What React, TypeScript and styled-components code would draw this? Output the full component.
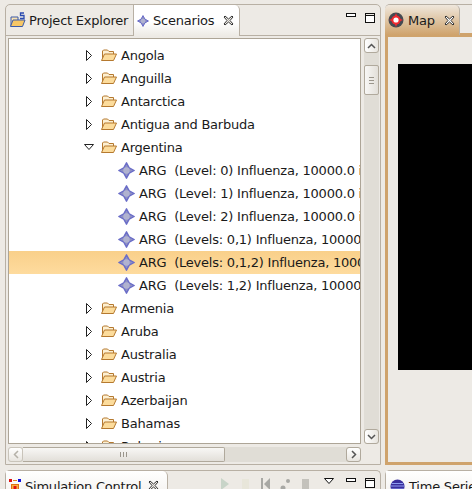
import React from 'react';
import styled, { createGlobalStyle } from 'styled-components';

const GlobalStyle = createGlobalStyle`
  html, body {
    margin: 0;
    padding: 0;
    background: #edeae5;
    overflow: hidden;
  }
`;

type Node = { label: string; kind: 'closed' | 'open' | 'scenario'; selected?: boolean };

const nodes: Node[] = [
  { label: 'Angola', kind: 'closed' },
  { label: 'Anguilla', kind: 'closed' },
  { label: 'Antarctica', kind: 'closed' },
  { label: 'Antigua and Barbuda', kind: 'closed' },
  { label: 'Argentina', kind: 'open' },
  { label: 'ARG  (Level: 0) Influenza, 10000.0 infectious', kind: 'scenario' },
  { label: 'ARG  (Level: 1) Influenza, 10000.0 infectious', kind: 'scenario' },
  { label: 'ARG  (Level: 2) Influenza, 10000.0 infectious', kind: 'scenario' },
  { label: 'ARG  (Levels: 0,1) Influenza, 10000.0 infectious', kind: 'scenario' },
  { label: 'ARG  (Levels: 0,1,2) Influenza, 10000.0 infectious', kind: 'scenario', selected: true },
  { label: 'ARG  (Levels: 1,2) Influenza, 10000.0 infectious', kind: 'scenario' },
  { label: 'Armenia', kind: 'closed' },
  { label: 'Aruba', kind: 'closed' },
  { label: 'Australia', kind: 'closed' },
  { label: 'Austria', kind: 'closed' },
  { label: 'Azerbaijan', kind: 'closed' },
  { label: 'Bahamas', kind: 'closed' },
  { label: 'Bahrain', kind: 'closed' },
];

const ScenarioIcon: React.FC = () => (
  <svg width="17" height="17" viewBox="0 0 17 17">
    <path
      d="M8.5 0.8 L11.2 5.8 L16.2 8.5 L11.2 11.2 L8.5 16.2 L5.8 11.2 L0.8 8.5 L5.8 5.8 Z"
      fill="#8f91c4"
      stroke="#6a6dc8"
      strokeWidth="1.4"
      strokeLinejoin="round"
    />
    <circle cx="8.5" cy="8.5" r="3.2" fill="#b0b2d0" />
  </svg>
);

const FolderIcon: React.FC = () => (
  <svg width="16" height="13" viewBox="0 0 16 13">
    <path d="M1.5 11.5 V2 L2.5 1 H6.5 L8 2.5 H12.5 V5" fill="#fdf0d2" stroke="#b5792f" strokeWidth="1" />
    <path d="M0.5 11.5 L3.5 5 H15.5 L12.5 11.5 Z" fill="#fcdc9c" stroke="#b5792f" strokeWidth="1" strokeLinejoin="round" />
  </svg>
);

const Twisty: React.FC<{ open?: boolean }> = ({ open }) => (
  <svg width="11" height="11" viewBox="0 0 11 11">
    {open ? (
      <path d="M0.5 2.5 H9.5 L5 7.5 Z" fill="#fff" stroke="#222" strokeWidth="1" />
    ) : (
      <path d="M2.5 0.5 V10.5 L7.5 5.5 Z" fill="#fff" stroke="#222" strokeWidth="1" />
    )}
  </svg>
);

const CloseIcon: React.FC<{ light?: boolean }> = ({ light }) => (
  <svg width="11" height="11" viewBox="0 0 11 11">
    <path
      d="M2 1 L5.5 4 L9 1 L10 2 L7 5.5 L10 9 L9 10 L5.5 7 L2 10 L1 9 L4 5.5 L1 2 Z"
      fill={light ? '#fff' : '#edeae5'}
      stroke="#333"
      strokeWidth="1"
      strokeLinejoin="round"
    />
  </svg>
);

const MinimizeIcon: React.FC = () => (
  <svg width="10" height="5" viewBox="0 0 10 5">
    <rect x="0.5" y="0.5" width="9" height="3" fill="#fff" stroke="#111" />
  </svg>
);

const MaximizeIcon: React.FC = () => (
  <svg width="10" height="10" viewBox="0 0 10 10">
    <rect x="0.5" y="0.5" width="9" height="9" fill="#fff" stroke="#111" />
    <rect x="0.5" y="0.5" width="9" height="2" fill="#edeae5" stroke="#111" />
  </svg>
);

const DropArrow: React.FC = () => (
  <svg width="10" height="6" viewBox="0 0 10 6">
    <path d="M0.5 0.5 H9.5 L5 5.5 Z" fill="#fff" stroke="#111" strokeWidth="1" />
  </svg>
);

const ExplorerIcon: React.FC = () => (
  <svg width="16" height="16" viewBox="0 0 16 16">
    <path d="M1 14 V5 H8 V14 Z" fill="#fbe3b0" stroke="#3a5aa8" />
    <path d="M0.5 14.5 L3 8 H15 L12.5 14.5 Z" fill="#f6c766" stroke="#3a5aa8" />
    <path d="M14 1 H10.5 V3.5 H14 V6.5 H10" fill="none" stroke="#2b4bb0" strokeWidth="1.3" />
  </svg>
);

const MapIcon: React.FC = () => (
  <svg width="16" height="16" viewBox="0 0 16 16">
    <circle cx="8" cy="8" r="7.5" fill="#454a52" />
    <path d="M8 1 L10 6 L15 8 L10 10 L8 15 L6 10 L1 8 L6 6 Z" fill="#f02a30" />
    <circle cx="8" cy="8" r="4.6" fill="#f02a30" />
    <circle cx="8" cy="8" r="2.6" fill="#fff" />
  </svg>
);

const SimulationIcon: React.FC = () => (
  <svg width="12" height="12" viewBox="0 0 12 12">
    <rect x="0" y="0" width="3" height="3" fill="#e01010" />
    <rect x="9" y="0" width="3" height="3" fill="#1010e0" />
    <rect x="4" y="1" width="4" height="1" fill="#e08020" />
    <rect x="2.5" y="5.5" width="7" height="6" fill="#f8b040" stroke="#e07010" />
    <rect x="4.5" y="7" width="3" height="3" fill="#e01010" />
  </svg>
);

const GlobeIcon: React.FC = () => (
  <svg width="15" height="15" viewBox="0 0 15 15">
    <circle cx="7.5" cy="7.5" r="7" fill="#3a2f9c" />
    <path d="M0.5 7 H14.5 M1 10 H14 M1.5 4.5 H13" stroke="#8d9cf0" strokeWidth="1.2" />
  </svg>
);

const ToolbarGlyphs: React.FC = () => (
  <svg width="88" height="12" viewBox="0 0 88 12">
    <path d="M0 0 L8 6 L0 12 Z" fill="#c8d4c8" />
    <rect x="21" y="1" width="7" height="11" fill="#e8e6da" />
    <rect x="40" y="0" width="2" height="12" fill="#a8a8a4" />
    <path d="M43 6 L49 0 V12 Z" fill="#a8a8a4" />
    <circle cx="67" cy="3" r="2" fill="#a8a8a4" />
    <circle cx="62" cy="10" r="2.5" fill="#a8a8a4" />
    <rect x="81" y="1" width="7" height="11" fill="#c4c2bc" />
  </svg>
);

const ScrollUp: React.FC = () => (
  <svg width="9" height="6" viewBox="0 0 9 6">
    <path d="M1 5 L4.5 1.5 L8 5" fill="none" stroke="#555" strokeWidth="1.5" />
  </svg>
);

const ScrollDown: React.FC = () => (
  <svg width="9" height="6" viewBox="0 0 9 6">
    <path d="M1 1 L4.5 4.5 L8 1" fill="none" stroke="#555" strokeWidth="1.5" />
  </svg>
);

const ScrollLeft: React.FC = () => (
  <svg width="6" height="9" viewBox="0 0 6 9">
    <path d="M5 1 L1.5 4.5 L5 8" fill="none" stroke="#b5b1a8" strokeWidth="1.5" />
  </svg>
);

const ScrollRight: React.FC = () => (
  <svg width="6" height="9" viewBox="0 0 6 9">
    <path d="M1 1 L4.5 4.5 L1 8" fill="none" stroke="#555" strokeWidth="1.5" />
  </svg>
);

const App: React.FC = () => (
  <Workbench>
    <GlobalStyle />
    <ScenariosPanel>
      <TabBar>
        <InactiveTab>
          <ExplorerIcon />
          Project Explorer
        </InactiveTab>
        <ActiveTab>
          <SmallDiamond>
            <ScenarioIcon />
          </SmallDiamond>
          Scenarios
          <CloseSlot>
            <CloseIcon />
          </CloseSlot>
        </ActiveTab>
        <TabFill>
          <MinimizeIcon />
          <MaximizeIcon />
        </TabFill>
      </TabBar>
      <ViewBody>
        <TreeBox>
          {nodes.map((node) => (
            <TreeRow key={node.label} $selected={node.selected}>
              {node.kind === 'scenario' ? (
                <ScenarioCell>
                  <ScenarioIcon />
                </ScenarioCell>
              ) : (
                <FolderCell>
                  <Twisty open={node.kind === 'open'} />
                  <FolderIcon />
                </FolderCell>
              )}
              <RowLabel>{node.label}</RowLabel>
            </TreeRow>
          ))}
        </TreeBox>
        <VerticalBar>
          <ArrowButton>
            <ScrollUp />
          </ArrowButton>
          <BarThumbTrack>
            <TrackSpacer $height={12} />
            <VerticalThumb>
              <Grip />
              <Grip />
              <Grip />
            </VerticalThumb>
          </BarThumbTrack>
          <ArrowButton>
            <ScrollDown />
          </ArrowButton>
        </VerticalBar>
        <HorizontalBar>
          <SideButton $disabled>
            <ScrollLeft />
          </SideButton>
          <HorizontalThumb>
            <VGrip />
            <VGrip />
            <VGrip />
          </HorizontalThumb>
          <BarThumbTrack />
          <SideButton>
            <ScrollRight />
          </SideButton>
        </HorizontalBar>
      </ViewBody>
    </ScenariosPanel>

    <MapPanel>
      <MapTabBar>
        <MapTab>
          <MapIcon />
          Map
          <MapClose>
            <CloseIcon light />
          </MapClose>
        </MapTab>
        <MapTabRest />
      </MapTabBar>
      <MapBody>
        <MapCanvas />
      </MapBody>
    </MapPanel>

    <ControlPanel>
      <ControlTab>
        <SimulationIcon />
        Simulation Control
        <ControlClose>
          <CloseIcon />
        </ControlClose>
      </ControlTab>
      <ControlTools>
        <GlyphSlot>
          <ToolbarGlyphs />
        </GlyphSlot>
        <DropSlot>
          <DropArrow />
        </DropSlot>
        <MinimizeIcon />
        <MaximizeIcon />
      </ControlTools>
    </ControlPanel>

    <SeriesPanel>
      <SeriesTab>
        <GlobeIcon />
        Time Series
      </SeriesTab>
    </SeriesPanel>
  </Workbench>
);

const Workbench = styled.div`
  width: 472px;
  height: 489px;
  overflow: hidden;
  display: grid;
  grid-template-columns: 376px 87px;
  grid-template-rows: 461px 19px;
  column-gap: 4px;
  row-gap: 5px;
  padding: 4px 0 0 5px;
  box-sizing: border-box;
  background: #edeae5;
  font-family: 'DejaVu Sans', sans-serif;
  font-size: 13px;
  letter-spacing: -0.22px;
  color: #1a1a1a;

  svg {
    flex: none;
  }
`;

const ScenariosPanel = styled.section`
  width: 376px;
  height: 461px;
  box-sizing: border-box;
  border: 1px solid #b8b0a4;
  border-radius: 5px 5px 0 0;
  display: flex;
  flex-direction: column;
  overflow: hidden;
`;

const TabBar = styled.div`
  height: 31px;
  display: flex;
  flex: none;
`;

const InactiveTab = styled.div`
  width: 128px;
  box-sizing: border-box;
  display: flex;
  align-items: center;
  gap: 3px;
  padding-left: 4px;
  border-right: 1px solid #b8b0a4;
  border-bottom: 1px solid #b8b0a4;
  white-space: nowrap;
`;

const ActiveTab = styled.div`
  width: 106px;
  box-sizing: border-box;
  display: flex;
  align-items: center;
  gap: 4px;
  padding-left: 3px;
  background: linear-gradient(#fff 0%, #fff 55%, #edeae5 100%);
  border-right: 1px solid #b8b0a4;
  border-top-right-radius: 5px;
  white-space: nowrap;
`;

const SmallDiamond = styled.span`
  width: 12px;
  height: 12px;
  display: flex;
  align-items: center;
  justify-content: center;
  & > svg {
    width: 12px;
    height: 12px;
  }
`;

const CloseSlot = styled.span`
  display: flex;
  margin-left: 5px;
`;

const MapClose = styled.span`
  display: flex;
  margin-left: 5px;
`;

const ControlClose = styled.span`
  display: flex;
  margin-left: 3px;
  margin-top: 1px;
`;

const TabFill = styled.div`
  flex: 1;
  box-sizing: border-box;
  display: flex;
  align-items: flex-start;
  justify-content: flex-end;
  gap: 9px;
  padding: 8px 5px 0 0;
  border-bottom: 1px solid #b8b0a4;
`;

const ViewBody = styled.div`
  flex: 1;
  min-height: 0;
  display: grid;
  grid-template-columns: 353px 15px;
  grid-template-rows: 406px 15px;
  column-gap: 3px;
  row-gap: 3px;
  padding: 2px 0 0 2px;
`;

const TreeBox = styled.div`
  box-sizing: border-box;
  border: 1px solid #ada597;
  background: #fff;
  overflow: hidden;
  padding-top: 5px;
`;

const TreeRow = styled.div<{ $selected?: boolean }>`
  height: 23px;
  box-sizing: border-box;
  display: flex;
  align-items: center;
  white-space: nowrap;
  background: ${(p) => (p.$selected ? 'linear-gradient(#f9d08a, #fedb9e)' : 'transparent')};
`;

const FolderCell = styled.span`
  width: 112px;
  flex: none;
  box-sizing: border-box;
  padding-left: 75px;
  display: flex;
  align-items: center;
  gap: 6px;
`;

const ScenarioCell = styled.span`
  width: 130px;
  flex: none;
  box-sizing: border-box;
  padding-left: 109px;
  display: flex;
  align-items: center;
`;

const RowLabel = styled.span`
  white-space: pre;
`;

const VerticalBar = styled.div`
  display: flex;
  flex-direction: column;
  background: #e0ddd6;
  border-radius: 3px;
`;

const ArrowButton = styled.div`
  height: 15px;
  flex: none;
  box-sizing: border-box;
  display: flex;
  align-items: center;
  justify-content: center;
  border: 1px solid #b0a99c;
  border-radius: 3px;
  background: linear-gradient(90deg, #fff, #e8e5df);
`;

const BarThumbTrack = styled.div`
  flex: 1;
`;

const TrackSpacer = styled.div<{ $height: number }>`
  height: ${(p) => p.$height}px;
`;

const VerticalThumb = styled.div`
  height: 30px;
  box-sizing: border-box;
  display: flex;
  flex-direction: column;
  align-items: center;
  justify-content: center;
  gap: 2px;
  border: 1px solid #b0a99c;
  border-radius: 2px;
  background: linear-gradient(90deg, #f8f7f5, #e2dfd9);
`;

const Grip = styled.span`
  width: 5px;
  height: 1px;
  background: #9a958b;
`;

const HorizontalBar = styled.div`
  display: flex;
  align-items: stretch;
  background: #e0ddd6;
  border-radius: 3px;
`;

const SideButton = styled.div<{ $disabled?: boolean }>`
  width: 15px;
  flex: none;
  box-sizing: border-box;
  display: flex;
  align-items: center;
  justify-content: center;
  border: 1px solid ${(p) => (p.$disabled ? '#c9c4ba' : '#b0a99c')};
  border-radius: 3px;
  background: linear-gradient(#fff, #e8e5df);
`;

const HorizontalThumb = styled.div`
  width: 202px;
  flex: none;
  box-sizing: border-box;
  display: flex;
  align-items: center;
  justify-content: center;
  gap: 2px;
  border: 1px solid #b0a99c;
  border-left: none;
  border-radius: 0 2px 2px 0;
  background: linear-gradient(#f8f7f5, #e2dfd9);
`;

const VGrip = styled.span`
  width: 1px;
  height: 5px;
  background: #9a958b;
`;

const MapPanel = styled.section`
  width: 87px;
  height: 461px;
  display: flex;
  flex-direction: column;
`;

const MapTabBar = styled.div`
  height: 31px;
  flex: none;
  display: flex;
  background: #edeae5;
  border-top: 1px solid #b8b0a4;
  box-sizing: border-box;
  border-top-left-radius: 5px;
`;

const MapTab = styled.div`
  width: 75px;
  box-sizing: border-box;
  display: flex;
  align-items: center;
  gap: 4px;
  padding-left: 3px;
  background: linear-gradient(#efe7dc 0%, #cfa36c 100%);
  border-right: 1px solid #b8b0a4;
  border-top-left-radius: 5px;
  border-top-right-radius: 5px;
  white-space: nowrap;
`;

const MapTabRest = styled.div`
  flex: 1;
  border-bottom: 2px solid #cfa36c;
  box-sizing: border-box;
`;

const MapBody = styled.div`
  flex: 1;
  box-sizing: border-box;
  border: 3px solid #cfa36c;
  border-top-width: 2px;
  border-right: none;
  background: #edeae5;
  padding: 27px 0 92px 10px;
  min-height: 0;
`;

const MapCanvas = styled.div`
  height: 100%;
  background: #000;
`;

const ControlPanel = styled.section`
  width: 376px;
  height: 40px;
  box-sizing: border-box;
  display: flex;
  border: 1px solid #b8b0a4;
  border-bottom: none;
  border-radius: 5px 5px 0 0;
`;

const ControlTab = styled.div`
  width: 162px;
  height: 40px;
  flex: none;
  box-sizing: border-box;
  display: flex;
  align-items: flex-start;
  gap: 4px;
  padding: 8px 0 0 3px;
  background: linear-gradient(#fff, #edeae5);
  border-right: 1px solid #b8b0a4;
  border-top-right-radius: 5px;
  white-space: nowrap;
`;

const ControlTools = styled.div`
  flex: 1;
  display: flex;
  align-items: flex-start;
  justify-content: flex-end;
  gap: 9px;
  padding: 7px 5px 0 0;
`;

const GlyphSlot = styled.span`
  display: flex;
  margin-right: 6px;
`;

const DropSlot = styled.span`
  display: flex;
  margin-right: 3px;
`;

const SeriesPanel = styled.section`
  width: 87px;
  height: 40px;
  box-sizing: border-box;
  border-top: 1px solid #b8b0a4;
  border-left: 1px solid #b8b0a4;
  border-top-left-radius: 5px;
`;

const SeriesTab = styled.div`
  display: flex;
  align-items: flex-start;
  gap: 4px;
  padding: 8px 0 0 4px;
  white-space: nowrap;
  background: linear-gradient(#fff, #edeae5);
  height: 40px;
  box-sizing: border-box;
`;

export default App;
